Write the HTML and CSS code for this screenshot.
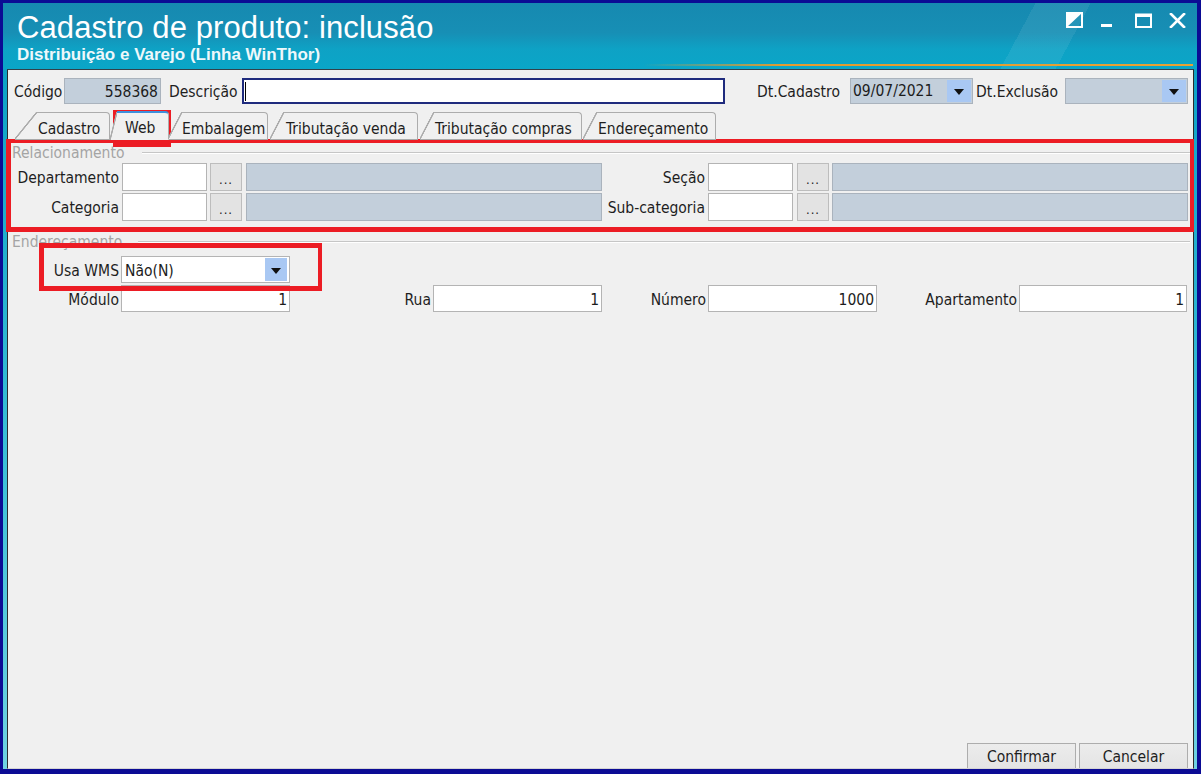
FILE: index.html
```html
<!DOCTYPE html>
<html lang="pt-BR">
<head>
<meta charset="utf-8">
<title>Cadastro de produto: inclusão</title>
<link rel="stylesheet" href="styles.css">
</head>
<body>
<div class="window">
  <div class="chrome">
    <header class="titlebar">
      <div class="titles">
        <h1 class="title">Cadastro de produto: inclusão</h1>
        <div class="subtitle">Distribuição e Varejo (Linha WinThor)</div>
      </div>
      <div class="controls">
        <svg class="ctl ctl-skin" width="17" height="16" viewBox="0 0 17 16">
          <rect x="1" y="1" width="15" height="14" fill="none" stroke="#fff" stroke-width="2"/>
          <polygon points="1,1 16,1 1,15" fill="#fff"/>
        </svg>
        <svg class="ctl ctl-min" width="11" height="4" viewBox="0 0 11 4">
          <rect x="0" y="0" width="11" height="3" fill="#fff"/>
        </svg>
        <svg class="ctl ctl-max" width="17" height="15" viewBox="0 0 17 15">
          <rect x="1" y="1.5" width="15" height="12.5" fill="none" stroke="#fff" stroke-width="2"/>
          <rect x="1" y="1" width="15" height="3" fill="#fff"/>
        </svg>
        <svg class="ctl ctl-close" width="17" height="15" viewBox="0 0 17 15">
          <path d="M2 1 L15 14 M15 1 L2 14" stroke="#fff" stroke-width="2.6" stroke-linecap="square"/>
        </svg>
      </div>
    </header>

    <main class="client">
      <div class="row row-head">
        <span class="lbl lbl-codigo">Código</span>
        <div class="field ro num w-codigo">558368</div>
        <span class="lbl lbl-desc">Descrição</span>
        <div class="field focus w-desc"><span class="caret"></span></div>
        <span class="lbl lbl-dtcad">Dt.Cadastro</span>
        <div class="combo ro w-date"><span class="combo-text">09/07/2021</span><span class="drop"></span></div>
        <span class="lbl lbl-dtexc">Dt.Exclusão</span>
        <div class="combo ro w-date"><span class="combo-text"></span><span class="drop"></span></div>
      </div>

      <nav class="tabs">
        <div class="tab tab-first w-cadastro">Cadastro</div>
        <div class="tab active w-web">Web</div>
        <div class="tab w-embalagem">Embalagem</div>
        <div class="tab w-tribv">Tributação venda</div>
        <div class="tab w-tribc">Tributação compras</div>
        <div class="tab w-ender">Endereçamento</div>
      </nav>

      <section class="group group-rel">
        <div class="legend"><span class="legend-text">Relacionamento</span><span class="legend-line"></span></div>
        <div class="row row-lookup">
          <span class="lbl lbl-left">Departamento</span>
          <div class="field w-code"></div>
          <div class="dots">...</div>
          <div class="field ro w-name"></div>
          <span class="lbl lbl-mid">Seção</span>
          <div class="field w-code"></div>
          <div class="dots">...</div>
          <div class="field ro w-name"></div>
        </div>
        <div class="row row-lookup">
          <span class="lbl lbl-left">Categoria</span>
          <div class="field w-code"></div>
          <div class="dots">...</div>
          <div class="field ro w-name"></div>
          <span class="lbl lbl-mid">Sub-categoria</span>
          <div class="field w-code"></div>
          <div class="dots">...</div>
          <div class="field ro w-name"></div>
        </div>
      </section>

      <section class="group group-end">
        <div class="legend"><span class="legend-text">Endereçamento</span><span class="legend-line"></span></div>
        <div class="row row-wms">
          <span class="lbl lbl-left">Usa WMS</span>
          <div class="combo w-addr"><span class="combo-text">Não(N)</span><span class="drop drop-wms"></span></div>
        </div>
        <div class="row row-addr">
          <span class="lbl lbl-left">Módulo</span>
          <div class="field num w-addr">1</div>
          <span class="lbl lbl-rua">Rua</span>
          <div class="field num w-addr">1</div>
          <span class="lbl lbl-num">Número</span>
          <div class="field num w-addr">1000</div>
          <span class="lbl lbl-apto">Apartamento</span>
          <div class="field num w-apto">1</div>
        </div>
      </section>

      <div class="spacer"></div>

      <footer class="actions">
        <button class="btn">Confirmar</button>
        <button class="btn">Cancelar</button>
      </footer>
    </main>
  </div>

  <div class="mark mark-tab"></div>
  <div class="mark mark-rel"></div>
  <div class="mark mark-wms"></div>
</div>
</body>
</html>
```

FILE: styles.css
```css
* { box-sizing: border-box; }

html, body { margin: 0; }

body {
  background: #0b0b94;
  font-family: "DejaVu Sans Condensed", "Liberation Sans", sans-serif;
  font-size: 15.5px;
  color: #1c1c1c;
}

/* ---------- window frame ---------- */
.window {
  position: relative;
  width: 1201px;
  height: 774px;
  padding: 3px 4px 5px 3px;
  display: flex;
  flex-direction: column;
  overflow: hidden;
  background: #0b0b94;
}

.chrome {
  flex: 1;
  display: flex;
  flex-direction: column;
  padding: 0 3px 0 4px;
  background: linear-gradient(180deg, #1690b6 0%, #0ea3c6 10%, #3cc0d8 60%, #6fd2e2 100%);
}

/* ---------- title bar ---------- */
.titlebar {
  position: relative;
  height: 66px;
  margin: 0 -3px 0 -4px;
  padding: 0 0 0 14px;
  display: flex;
  justify-content: space-between;
  background:
    linear-gradient(118deg, transparent 0 84%, rgba(255,255,255,0.07) 84% 88.5%, transparent 88.5%),
    linear-gradient(180deg, #1689b0 0%, #178fb5 45%, #0ea2c5 70%, #0aa6c8 100%);
}

.titlebar::after {
  content: "";
  position: absolute;
  left: 640px;
  right: 4px;
  bottom: 3px;
  height: 2px;
  background: linear-gradient(90deg, rgba(232,160,48,0) 0%, #e39b2f 25%, #e8a233 100%);
}

.titles { padding-top: 7px; }

.title {
  margin: 0;
  font-family: "Liberation Sans", Arial, sans-serif;
  font-weight: normal;
  font-size: 31px;
  line-height: 35px;
  color: #ffffff;
  letter-spacing: 0.1px;
}

.subtitle {
  margin-top: 1px;
  font-family: "Liberation Sans", Arial, sans-serif;
  font-weight: bold;
  font-size: 17px;
  line-height: 18px;
  color: #eef8fb;
}

.controls {
  display: flex;
  align-items: flex-start;
  padding: 9px 11px 0 0;
}

.ctl { display: block; }
.ctl-min { margin: 12px 0 0 18px; }
.ctl-max { margin: 1px 0 0 23px; }
.ctl-close { margin: 1px 0 0 17px; }

/* ---------- client area ---------- */
.client {
  flex: 1;
  display: flex;
  flex-direction: column;
  overflow: hidden;
  padding-top: 8px;
  background: #f0f0f0;
  border-top: 1px solid #33414a;
  border-left: 1px solid #2c2c2c;
  border-right: 1px solid #2c2c2c;
  border-bottom: 1px solid #d4d4d4;
}

.row {
  display: flex;
  align-items: stretch;
}

.lbl {
  display: flex;
  align-items: center;
  padding-top: 2px;
  white-space: nowrap;
  color: #1e1e1e;
}

/* generic boxes */
.field {
  display: flex;
  align-items: center;
  padding: 2px 3px 0;
  background: #ffffff;
  border: 1px solid #b4b4b4;
  white-space: nowrap;
}

.field.num { justify-content: flex-end; padding-right: 2px; }

.ro {
  background: #c3cfdb;
  border-color: #aab3bd;
}

.focus {
  border: 2px solid #1f2b7d;
  padding: 0 0 0 1px;
}

.caret {
  width: 1px;
  height: 19px;
  background: #000;
}

.combo {
  display: flex;
  align-items: center;
  background: #ffffff;
  border: 1px solid #b4b4b4;
  padding: 0 1px 0 2px;
}

.combo.ro {
  background: #c3cfdb;
  border-color: #aab3bd;
}

.combo-text { flex: 1; white-space: nowrap; }

.drop {
  position: relative;
  width: 24px;
  align-self: stretch;
  margin: 1px 0;
  background: #a9c8f3;
}

.drop::after {
  content: "";
  position: absolute;
  left: 50%;
  top: 50%;
  margin: -2px 0 0 -5px;
  border-left: 5px solid transparent;
  border-right: 5px solid transparent;
  border-top: 6px solid #111;
}

.drop-wms { width: 22px; margin-right: 1px; }

/* ---------- header row ---------- */
.row-head {
  height: 26px;
  padding-left: 6px;
}

.lbl-codigo { width: 48px; }
.w-codigo { width: 97px; margin-left: 2px; }
.lbl-desc { width: 71px; margin-left: 8px; }
.w-desc { width: 483px; margin-left: 2px; }
.lbl-dtcad { width: 91px; margin-left: 32px; }
.lbl-dtexc { width: 87px; margin-left: 3px; }
.w-date { width: 123px; margin-left: 2px; }

/* ---------- tabs ---------- */
.tabs {
  display: flex;
  align-items: flex-end;
  height: 30px;
  margin-top: 6px;
  border-bottom: 1px solid #a9a9a9;
}

.tab {
  position: relative;
  height: 28px;
  margin-bottom: -1px;
  padding: 7px 0 0 1px;
  white-space: nowrap;
  background: #f0f0f0;
  border-top: 1px solid #acacac;
  border-right: 1px solid #acacac;
  border-bottom: 1px solid #a9a9a9;
  border-top-right-radius: 4px;
  color: #1e1e1e;
}

.tab::before {
  content: "";
  position: absolute;
  top: -1px;
  bottom: -1px;
  left: -14px;
  width: 14px;
  background: linear-gradient(to bottom right,
    transparent calc(50% - 1px),
    #acacac calc(50% - 0.5px),
    #acacac calc(50% + 0.5px),
    #f0f0f0 calc(50% + 1px));
  border-bottom: 1px solid #a9a9a9;
}

.tab-first::before { left: -22px; width: 22px; }

.tab:nth-child(1) { z-index: 6; }
.tab:nth-child(2) { z-index: 7; }
.tab:nth-child(3) { z-index: 4; }
.tab:nth-child(4) { z-index: 3; }
.tab:nth-child(5) { z-index: 2; }
.tab:nth-child(6) { z-index: 1; }

.tab.active {
  height: 29px;
  padding-top: 6px;
  padding-left: 8px;
  border-top: 2px solid #3e8fdc;
  border-bottom-color: #f0f0f0;
}

.tab.active::before {
  left: -7px;
  width: 7px;
  border-bottom: none;
}

.w-cadastro { width: 73px; margin-left: 29px; }
.w-web { width: 52px; margin-left: 7px; }
.w-embalagem { width: 86px; margin-left: 13px; padding-left: 0; }
.w-tribv { width: 134px; margin-left: 16px; padding-left: 2px; }
.w-tribc { width: 148px; margin-left: 16px; padding-left: 1px; }
.w-ender { width: 119px; margin-left: 15px; }

/* ---------- group boxes ---------- */
.group { display: flex; flex-direction: column; }

.legend {
  display: flex;
  align-items: center;
  height: 16px;
  padding-left: 4px;
}

.legend-text {
  color: #a4a4a4;
  white-space: nowrap;
}

.legend-line {
  flex: 1;
  height: 2px;
  margin: 0 3px 0 18px;
  border-top: 1px solid #c6c6c6;
  border-bottom: 1px solid #ffffff;
}

.group-rel .legend { margin-top: 5px; }
.group-end .legend { margin-top: 13px; }
.group-end .legend-line { margin-left: 16px; }

.row-lookup { height: 28px; margin-top: 2px; }

.lbl-left { width: 111px; justify-content: flex-end; }
.lbl-mid { width: 103px; justify-content: flex-end; }

.row-lookup .lbl-left + .field { margin-left: 3px; }
.row-lookup .lbl-mid + .field { margin-left: 3px; }

.w-code { width: 85px; }
.w-name { width: 356px; margin-left: 4px; }
.row-lookup .lbl-mid ~ .w-name { margin-left: 3px; }

.dots {
  width: 32px;
  margin-left: 3px;
  display: flex;
  align-items: center;
  justify-content: center;
  padding-top: 4px;
  background: #e3e3e3;
  border: 1px solid #bdbdbd;
  font-size: 13px;
  letter-spacing: 1px;
  color: #222;
}

.row-lookup .lbl-mid ~ .dots { margin-left: 4px; }

.row-wms { height: 27px; margin-top: 6px; }
.row-addr { height: 27px; margin-top: 2px; }

.w-addr { width: 169px; margin-left: 2px; }
.w-apto { width: 168px; margin-left: 2px; }

.lbl-rua { width: 141px; justify-content: flex-end; }
.lbl-num { width: 104px; justify-content: flex-end; }
.lbl-apto { width: 140px; justify-content: flex-end; }

.row-wms .combo-text { padding: 2px 0 0 1px; }

/* ---------- footer buttons ---------- */
.spacer { flex: 1; }

.actions {
  display: flex;
  justify-content: flex-end;
  gap: 3px;
  padding-right: 5px;
  margin-bottom: -7px;
}

.btn {
  width: 109px;
  height: 32px;
  padding: 0 0 4px;
  font: inherit;
  line-height: 17px;
  color: #1e1e1e;
  background: linear-gradient(180deg, #ececec, #e2e2e2);
  border: 1px solid #adadad;
  border-radius: 0;
}

/* ---------- red highlight frames ---------- */
.mark {
  position: absolute;
  border: 4px solid #ec1c24;
  pointer-events: none;
}

.mark-tab { left: 113px; top: 110px; width: 58px; height: 37px; }
.mark-rel { left: 6px; top: 139px; width: 1188px; height: 93px; border-width: 4px 4px 5px 5px; }
.mark-wms { left: 39px; top: 243px; width: 283px; height: 48px; border-width: 5px 4px 5px 5px; }
```
